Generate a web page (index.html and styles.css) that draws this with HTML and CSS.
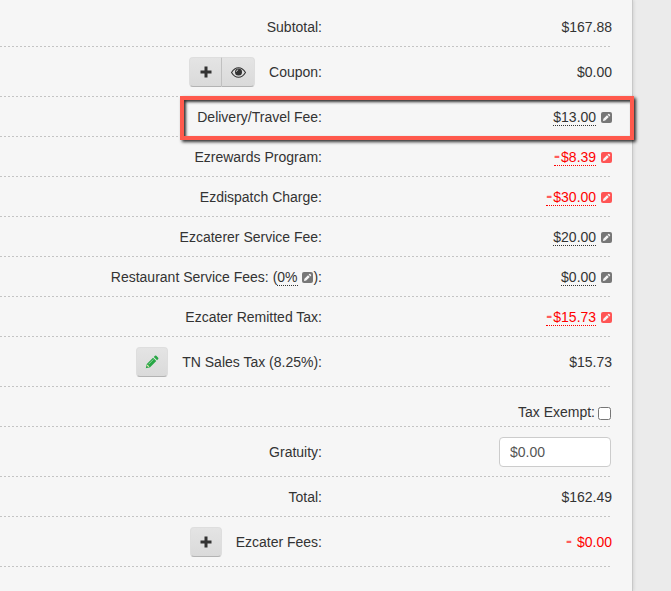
FILE: index.html
```html
<!DOCTYPE html>
<html lang="en">
<head>
  <meta charset="UTF-8" />
  <meta name="viewport" content="width=device-width, initial-scale=1.0"/>
  <title>Order Totals</title>
  <link rel="stylesheet" href="styles.css">
</head>
<body>
  <!-- Shared icons -->
  <svg class="sprite" width="0" height="0" aria-hidden="true">
    <symbol id="icon-edit" viewBox="0 0 11 11">
      <rect width="11" height="11" rx="2" fill="currentColor"/>
      <path d="M2 9 L2.4 6.8 L6 3.2 L7.8 5 L4.2 8.6 Z M6.6 2.6 L7.2 2 Q7.7 1.6 8.2 2 L9 2.8 Q9.4 3.3 9 3.8 L8.4 4.4 Z" fill="#f6f6f6"/>
    </symbol>
    <symbol id="icon-plus" viewBox="0 0 12 12">
      <path d="M4.5 0.5 H7.5 V4.5 H11.5 V7.5 H7.5 V11.5 H4.5 V7.5 H0.5 V4.5 H4.5 Z" fill="currentColor"/>
    </symbol>
    <symbol id="icon-eye" viewBox="0 0 14 12">
      <path d="M0.5 6 Q3.2 1.5 7 1.5 Q10.8 1.5 13.5 6 Q10.8 10.5 7 10.5 Q3.2 10.5 0.5 6 Z" fill="none" stroke="currentColor"/>
      <circle cx="7" cy="5.6" r="3.3" fill="currentColor"/>
      <path d="M5 5.3 Q5.2 3.8 6.7 3.5" fill="none" stroke="#dedede" stroke-width="0.8"/>
    </symbol>
    <symbol id="icon-pencil" viewBox="0 0 14 14">
      <path d="M0.8 13.2 L1.8 8.9 L8 2.7 L11.3 6 L5.1 12.2 Z M8.8 1.9 L9.9 0.8 Q10.6 0.3 11.3 0.8 L13.2 2.7 Q13.7 3.4 13.2 4.1 L12.1 5.2 Z" fill="#28a745"/>
      <path d="M3.6 9.2 L8.4 4.4" stroke="#a5dfb0" stroke-width="0.8"/>
      <path d="M1.9 10.8 L2.4 9.6 L4.4 11.6 L3.2 12.1 Z" fill="#f4e6bd"/>
    </symbol>
  </svg>

  <main class="panel">
    <div class="row">
      <div class="label">Subtotal:</div>
      <div class="value">$167.88</div>
    </div>

    <div class="row tall">
      <div class="label">
        <div class="btn-group">
          <button type="button" class="btn" aria-label="Add coupon"><svg width="12" height="12"><use href="#icon-plus"/></svg></button>
          <button type="button" class="btn" aria-label="View coupons"><svg width="15" height="13"><use href="#icon-eye"/></svg></button>
        </div>
        Coupon:
      </div>
      <div class="value">$0.00</div>
    </div>

    <div class="row">
      <div class="label">Delivery/Travel Fee:</div>
      <div class="value"><a href="#" class="edit"><span>$13.00</span> <svg><use href="#icon-edit"/></svg></a></div>
      <div class="highlight"></div>
    </div>

    <div class="row">
      <div class="label">Ezrewards Program:</div>
      <div class="value"><a href="#" class="edit negative"><span><b>-</b>$8.39</span> <svg><use href="#icon-edit"/></svg></a></div>
    </div>

    <div class="row">
      <div class="label">Ezdispatch Charge:</div>
      <div class="value"><a href="#" class="edit negative"><span><b>-</b>$30.00</span> <svg><use href="#icon-edit"/></svg></a></div>
    </div>

    <div class="row">
      <div class="label">Ezcaterer Service Fee:</div>
      <div class="value"><a href="#" class="edit"><span>$20.00</span> <svg><use href="#icon-edit"/></svg></a></div>
    </div>

    <div class="row">
      <div class="label"><div>Restaurant Service Fees: (<a href="#" class="edit"><span>0%</span> <svg><use href="#icon-edit"/></svg></a>):</div></div>
      <div class="value"><a href="#" class="edit"><span>$0.00</span> <svg><use href="#icon-edit"/></svg></a></div>
    </div>

    <div class="row">
      <div class="label">Ezcater Remitted Tax:</div>
      <div class="value"><a href="#" class="edit negative"><span><b>-</b>$15.73</span> <svg><use href="#icon-edit"/></svg></a></div>
    </div>

    <div class="row tall">
      <div class="label">
        <button type="button" class="btn" aria-label="Edit sales tax"><svg width="14" height="14"><use href="#icon-pencil"/></svg></button>
        TN Sales Tax (8.25%):
      </div>
      <div class="value">$15.73</div>
    </div>

    <div class="row exempt">
      <label for="tax-exempt">Tax Exempt:</label>
      <input type="checkbox" id="tax-exempt">
    </div>

    <div class="row tall">
      <label class="label" for="gratuity">Gratuity:</label>
      <div class="value"><input type="text" id="gratuity" class="text-input" value="$0.00"></div>
    </div>

    <div class="row">
      <div class="label">Total:</div>
      <div class="value">$162.49</div>
    </div>

    <div class="row tall">
      <div class="label">
        <button type="button" class="btn" aria-label="Add fee"><svg width="12" height="12"><use href="#icon-plus"/></svg></button>
        Ezcater Fees:
      </div>
      <div class="value negative"><div><b>-</b> $0.00</div></div>
    </div>
  </main>
</body>
</html>
```

FILE: styles.css
```css
* {
  box-sizing: border-box;
}

body {
  margin: 0;
  padding-right: 38px;
  background: #ebebeb;
  color: #333;
  font-family: "Liberation Sans", Arial, sans-serif;
  font-size: 14px;
  line-height: 20px;
}

.sprite {
  position: absolute;
}

.panel {
  min-height: 100vh;
  padding: 7px 20px 0 0;
  background: #f6f6f6;
  border-right: 1px solid #c8c8c8;
  box-shadow: 1px 0 3px rgba(0, 0, 0, 0.1);
}

/* Each row closes with a fine dashed rule */
.row {
  position: relative;
  display: grid;
  grid-template-columns: minmax(0, 1fr) 290px;
  align-items: center;
  min-height: 40px;
  background: repeating-linear-gradient(to right, #c4c4c4 0 2px, transparent 2px 4px) left bottom / 100% 1px no-repeat;
}

.tall {
  min-height: 50px;
}

.label {
  display: flex;
  justify-content: flex-end;
  align-items: center;
  gap: 14px;
}

.value {
  display: flex;
  justify-content: flex-end;
}

.exempt {
  display: flex;
  justify-content: flex-end;
  gap: 3px;
  padding: 10px 1px 0 0;
}

.exempt input {
  width: 13px;
  height: 13px;
  margin: 3px 0 0;
}

.edit {
  color: #333;
  text-decoration: none;
}

.edit span {
  border-bottom: 1px dotted;
}

.edit svg {
  width: 11px;
  height: 11px;
  margin-left: 1px;
  vertical-align: -1px;
  color: #777;
}

.negative {
  color: #f00;
}

.negative b {
  padding-right: 1px;
  color: #ff5c5c;
  font-size: 18px;
  line-height: 16px;
}

.edit.negative svg {
  color: #ff5555;
}

.btn-group {
  display: flex;
}

.btn {
  display: flex;
  align-items: center;
  justify-content: center;
  width: 32px;
  height: 30px;
  padding: 0;
  color: #333;
  background: linear-gradient(#e4e4e4, #dadada);
  border: 1px solid #dedede;
  border-bottom-color: #b3b3b3;
  border-radius: 4px;
  cursor: pointer;
}

.btn:hover {
  background: #d6d6d6;
}

.btn-group .btn {
  width: 33px;
}

.btn-group .btn:first-child {
  border-right-color: #c0c0c0;
  border-radius: 4px 0 0 4px;
}

.btn-group .btn:last-child {
  border-left: none;
  border-radius: 0 4px 4px 0;
}

.text-input {
  width: 112px;
  height: 30px;
  margin-right: 1px;
  padding: 4px 10px;
  color: #555;
  background: #fff;
  border: 1px solid #ccc;
  border-radius: 4px;
  font: inherit;
}

/* Callout drawn round the delivery fee */
.highlight {
  position: absolute;
  top: -1px;
  right: -22px;
  bottom: -3px;
  width: 454px;
  border: 4px solid #ff5a4d;
  box-shadow: 2px 2px 3px rgba(0, 0, 0, 0.8), inset 2px 2px 3px rgba(0, 0, 0, 0.8);
  pointer-events: none;
}
```
